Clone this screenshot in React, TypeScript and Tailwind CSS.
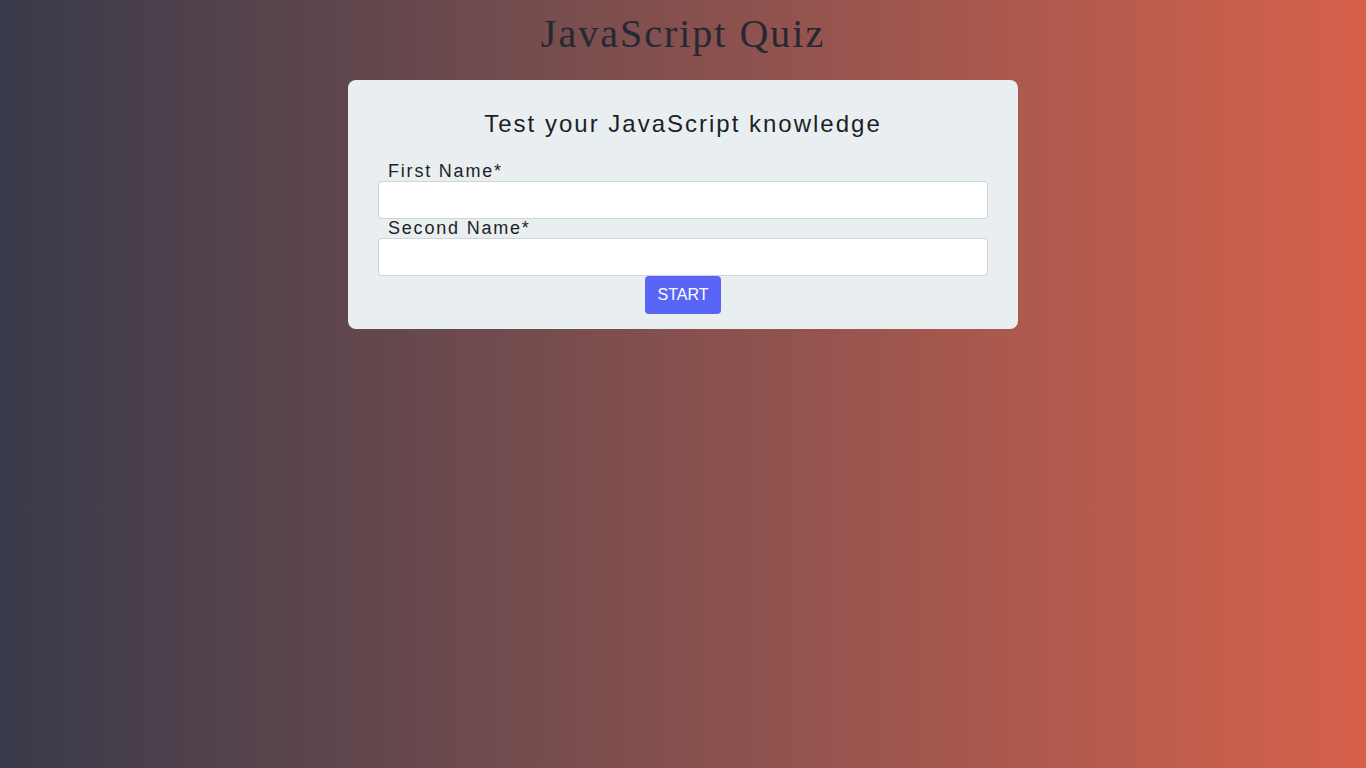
import React from "react";

export default function App() {
  return (
    <div className="min-h-screen w-full bg-linear-to-r from-[#393a4a] to-[#d6614a] flex flex-col items-center">
      <h1 className="mt-[11px] text-[40px] leading-[46px] tracking-[2px] text-[#262833] font-['Liberation_Serif',serif]">
        JavaScript Quiz
      </h1>
      <div className="mt-[23px] w-[670px] bg-[#e9eff0] rounded-lg px-[30px] pt-[30px] pb-[15px] font-['Liberation_Sans',Arial,sans-serif]">
        <h2 className="text-center text-[24px] leading-[28px] tracking-[2px] text-[#1d1f24] mb-[24px]">
          Test your JavaScript knowledge
        </h2>
        <form className="flex flex-col" onSubmit={(e) => e.preventDefault()}>
          <label className="pl-[10px] text-[18px] leading-[19px] tracking-[1.8px] text-[#1d1f24]">First Name*</label>
          <input
            type="text"
            className="h-[38px] w-full bg-white border border-[#ced4da] rounded-[4px] px-3 outline-none"
          />
          <label className="pl-[10px] text-[18px] leading-[19px] tracking-[1.8px] text-[#1d1f24]">Second Name*</label>
          <input
            type="text"
            className="h-[38px] w-full bg-white border border-[#ced4da] rounded-[4px] px-3 outline-none"
          />
          <div className="flex justify-center">
            <button
              type="submit"
              className="h-[38px] px-[13px] bg-[#5865f7] text-white text-[16px] rounded-[4px]"
            >
              START
            </button>
          </div>
        </form>
      </div>
    </div>
  );
}
